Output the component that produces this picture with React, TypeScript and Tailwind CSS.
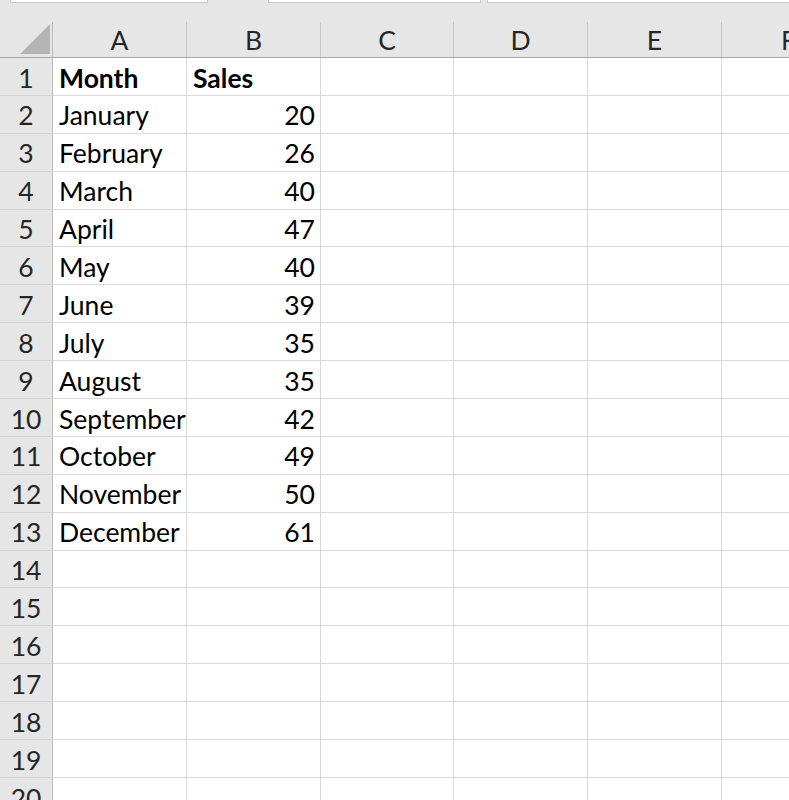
const COLS = ['A', 'B', 'C', 'D', 'E', 'F'];
const WIDTHS = ['w-[134px]', 'w-[134px]', 'w-[133px]', 'w-[134px]', 'w-[134px]', 'w-[134px]'];

const DATA: [string, number][] = [
  ['January', 20],
  ['February', 26],
  ['March', 40],
  ['April', 47],
  ['May', 40],
  ['June', 39],
  ['July', 35],
  ['August', 35],
  ['September', 42],
  ['October', 49],
  ['November', 50],
  ['December', 61],
];

const ROWS = Array.from({ length: 20 }, (_, i) => i + 1);

function Cell({ idx, children, align = 'left', bold = false }: { idx: number; children?: React.ReactNode; align?: 'left' | 'right'; bold?: boolean }) {
  return (
    <div
      className={`${WIDTHS[idx]} shrink-0 h-full border-r border-b border-[#d9d9d9] flex items-center pt-[4px] px-[6px] whitespace-nowrap overflow-visible ${
        align === 'right' ? 'justify-end pr-[5px]' : 'justify-start'
      } ${bold ? 'font-bold' : ''}`}
    >
      {children}
    </div>
  );
}

export default function App() {
  return (
    <div className="w-[789px] h-[800px] overflow-hidden bg-[#e6e6e6] text-black font-['Lato',sans-serif] text-[26.5px]">
      {/* ribbon edge */}
      <div className="h-[22px] flex items-start">
        <div className="ml-[10px] w-[198px] h-[3px] bg-white border border-t-0 border-[#c8c8c8]" />
        <div className="ml-[60px] w-[213px] h-[3px] bg-white border border-t-0 border-[#c8c8c8]" />
        <div className="ml-[6px] flex-1 h-[3px] bg-white border border-t-0 border-r-0 border-[#c8c8c8]" />
      </div>

      {/* column header */}
      <div className="flex h-[36px] border-b border-[#a6a6a6]">
        <div className="w-[53px] shrink-0 h-full border-r border-[#bcbcbc] flex items-end justify-end pr-[2px] pb-[3px]">
          <svg width="30" height="30" viewBox="0 0 30 30">
            <polygon points="30,0 30,30 0,30" fill="#b5b5b5" />
          </svg>
        </div>
        {COLS.map((c, i) => (
          <div key={c} className={`${WIDTHS[i]} shrink-0 h-full border-r border-[#c9c9c9] flex items-center justify-center pt-[2px] text-[#262626]`}>
            {c}
          </div>
        ))}
      </div>

      {/* rows */}
      {ROWS.map((r) => {
        const d = r >= 2 && r <= 13 ? DATA[r - 2] : null;
        return (
          <div key={r} className="flex h-[37.9px]">
            <div className="w-[53px] shrink-0 h-full border-r border-b border-[#bcbcbc] border-b-[#d4d4d4] flex items-center justify-center pt-[4px] text-[#262626]">
              {r}
            </div>
            <div className="flex bg-white h-full">
              {r === 1 ? (
                <>
                  <Cell idx={0} bold>Month</Cell>
                  <Cell idx={1} bold>Sales</Cell>
                </>
              ) : (
                <>
                  <Cell idx={0}>{d ? d[0] : null}</Cell>
                  <Cell idx={1} align="right">{d ? d[1] : null}</Cell>
                </>
              )}
              <Cell idx={2} />
              <Cell idx={3} />
              <Cell idx={4} />
              <Cell idx={5} />
            </div>
          </div>
        );
      })}
    </div>
  );
}
